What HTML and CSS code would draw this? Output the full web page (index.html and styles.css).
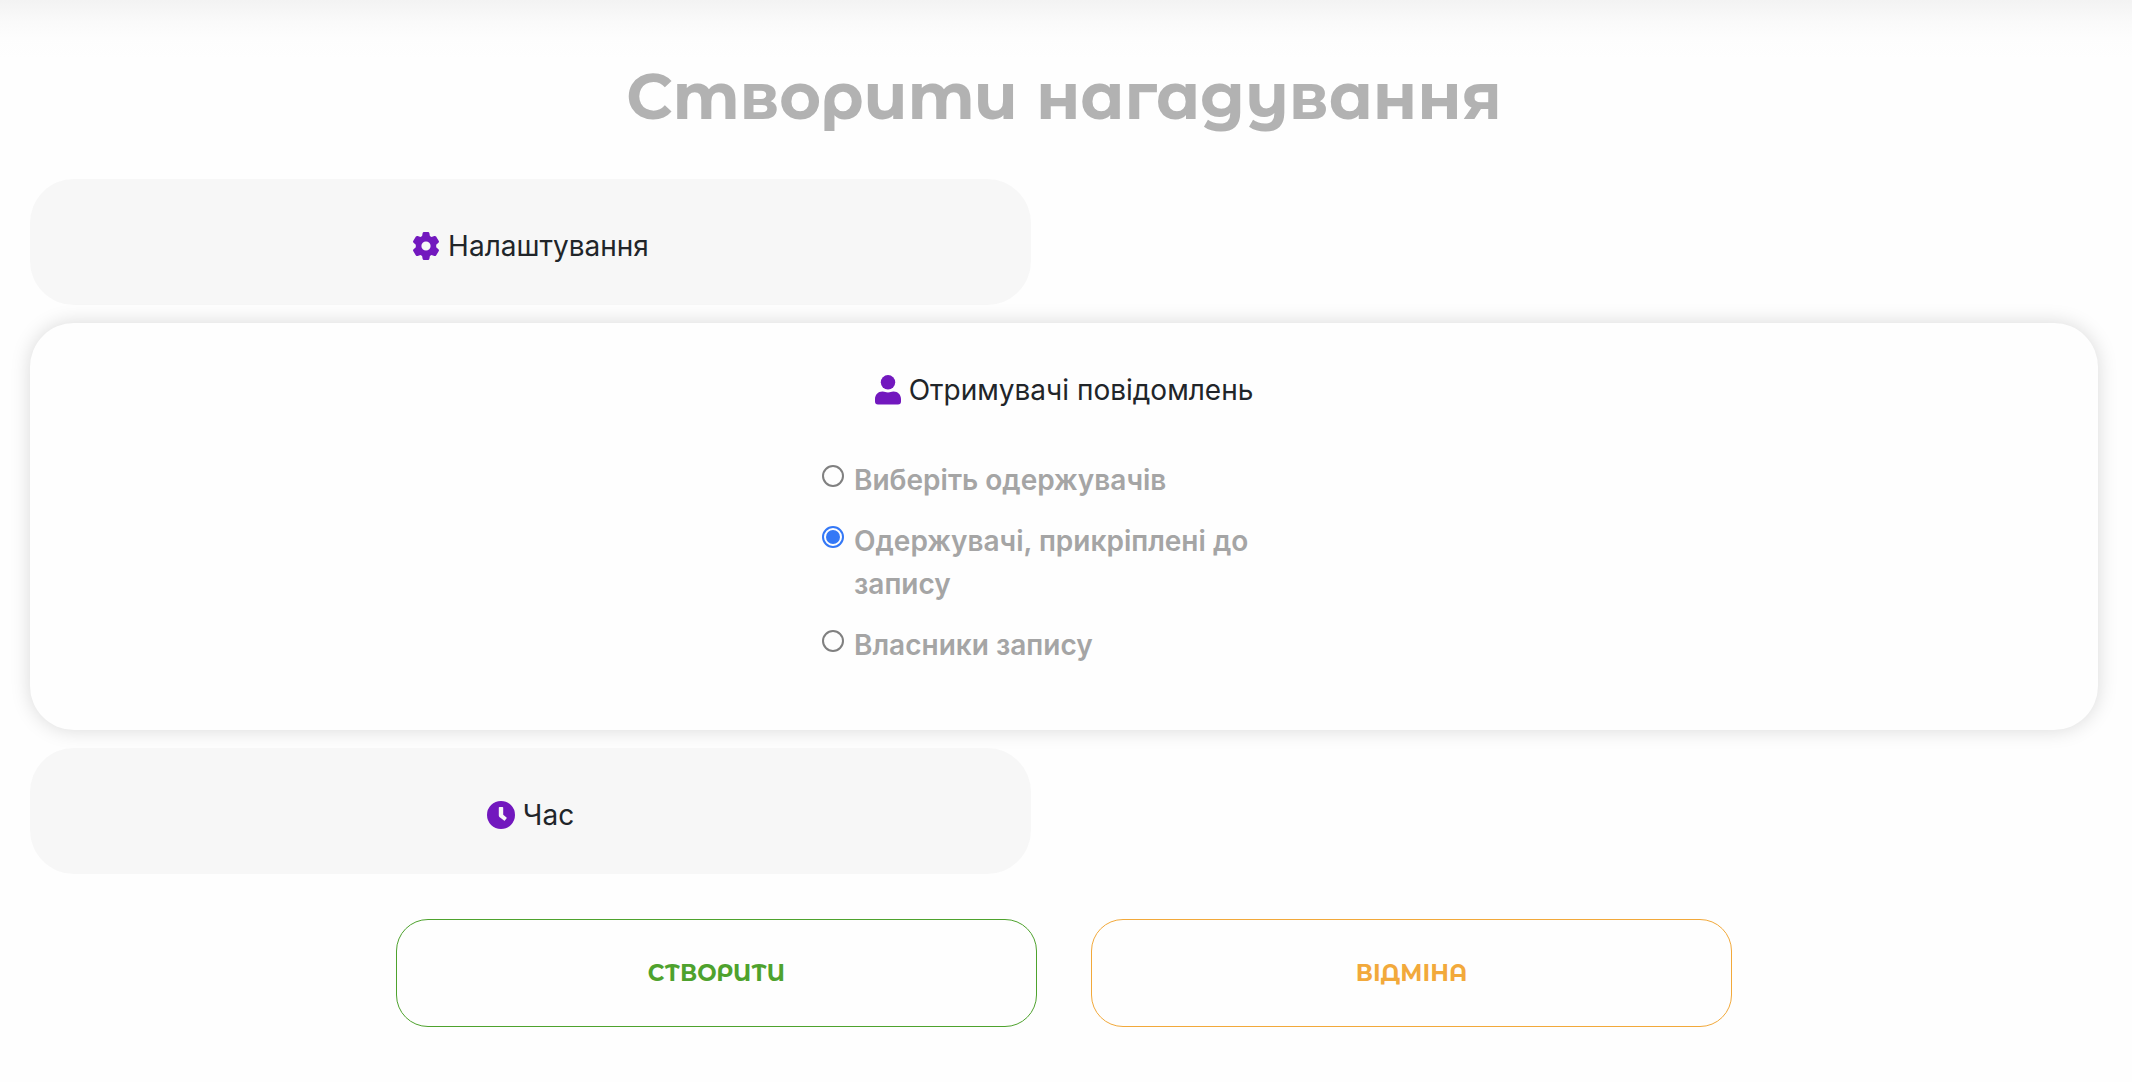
FILE: index.html
```html
<!DOCTYPE html>
<html lang="uk">
<head>
<meta charset="utf-8">
<meta name="viewport" content="width=device-width, initial-scale=1">
<title>Створити нагадування</title>
<link rel="stylesheet" href="styles.css">
</head>
<body>
<main class="page">
  <h1 class="title">Створити нагадування</h1>
  <form class="form">
    <section class="card">
      <h2 class="card-title">
        <svg class="icon" viewBox="0 0 28 28" aria-hidden="true"><path fill-rule="evenodd" d="M10.6 1.2Q10.8 0 12 0h4Q17.200 0 17.400 1.200L17.900 4.100 19.500 5 22.300 4Q23.400 3.600 24.100 4.600L26.800 9Q27.300 10 26.400 10.800L24.200 12.800V15.200L26.400 17.200Q27.300 18 26.800 19L24.100 23.400Q23.400 24.400 22.300 24L19.500 23 17.900 23.900 17.400 26.800Q17.200 28 16 28H12Q10.800 28 10.600 26.800L10.100 23.900 8.500 23 5.700 24Q4.600 24.400 3.900 23.400L1.200 19Q.7 18 1.600 17.200L3.800 15.200V12.800L1.600 10.800Q.7 10 1.200 9L3.900 4.600Q4.600 3.600 5.700 4L8.500 5 10.100 4.100ZM14 9.400a4.600 4.600 0 1 0 0 9.200a4.600 4.600 0 1 0 0-9.200Z"/></svg>
        Налаштування
      </h2>
    </section>

    <section class="card card-active">
      <h2 class="card-title">
        <svg class="icon icon-user" viewBox="0 0 26 30" aria-hidden="true"><circle cx="13" cy="7.300" r="7.200"/><path d="M7.500 16.500C10 16.500 10.500 17.500 13 17.500S16 16.500 18.500 16.500C23 16.500 26 20 26 24V26.500Q26 29.500 23 29.500H3Q0 29.500 0 26.500V24C0 20 3 16.500 7.500 16.500Z"/></svg>
        Отримувачі повідомлень
      </h2>
      <div class="options" role="radiogroup" aria-label="Отримувачі повідомлень">
        <label class="option"><input class="radio" type="radio" name="recipients"><span>Виберіть одержувачів</span></label>
        <label class="option"><input class="radio" type="radio" name="recipients" checked><span>Одержувачі, прикріплені до запису</span></label>
        <label class="option"><input class="radio" type="radio" name="recipients"><span>Власники запису</span></label>
      </div>
    </section>

    <section class="card">
      <h2 class="card-title">
        <svg class="icon" viewBox="0 0 28 28" aria-hidden="true"><path fill-rule="evenodd" d="M14 0a14 14 0 1 0 0 28a14 14 0 1 0 0-28ZM12.500 6h3q.7 0 .7.700v7.100l3.300 2.600q.5.400.100.900l-1.700 2.200q-.4.500-.900.100l-4.300-3.300q-.9-.700-.9-1.800V6.700q0-.7.700-.700Z"/></svg>
        Час
      </h2>
    </section>

    <div class="actions">
      <button class="button button-create" type="submit">СТВОРИТИ</button>
      <button class="button button-cancel" type="button">ВІДМІНА</button>
    </div>
  </form>
</main>
</body>
</html>
```
FILE: styles.css
```css
* {
  box-sizing: border-box;
}

body {
  margin: 0;
  background: #fefefe;
  background-image: linear-gradient(#f3f3f3, #f6f6f6 10px, #fafafa 22px, #fdfdfd 38px, #fefefe 60px);
  background-repeat: no-repeat;
  color: #212529;
  font-family: "Inter", "Liberation Sans", sans-serif;
  font-size: 28px;
  line-height: 43px;
}

.page {
  padding: 54px 34px 55px 30px;
}

.title {
  margin: 0 0 41px;
  color: #b2b2b2;
  font-family: "Montserrat Alternates", "DejaVu Sans", sans-serif;
  font-size: 64px;
  font-weight: 700;
  line-height: 84px;
  text-align: center;
}

.form {
  display: flex;
  flex-direction: column;
  gap: 18px;
}

.card {
  width: calc(50% - 33px);
  padding: 46px 30px 37px;
  border-radius: 44px;
  background: #f7f7f7;
}

.card-active {
  width: 100%;
  padding-bottom: 63px;
  background: #fefefe;
  box-shadow: 0 0 20px rgba(0, 0, 0, 0.15);
}

.card-title {
  display: flex;
  align-items: center;
  justify-content: center;
  gap: 8px;
  margin: 0;
  font-size: 28px;
  font-weight: 400;
}

.icon {
  flex: none;
  width: 28px;
  height: 28px;
  margin-bottom: 2px;
  fill: #7218be;
}

.icon-user {
  width: 26px;
  height: 30px;
}

.options {
  display: flex;
  flex-direction: column;
  gap: 18px;
  width: 484px;
  max-width: 100%;
  margin: 47px auto 0;
}

.option {
  display: flex;
  align-items: flex-start;
  gap: 10px;
  color: #a5a5a5;
  font-weight: 600;
}

.radio {
  flex: none;
  width: 22px;
  height: 22px;
  margin: 6px 0 0;
  padding: 2px;
  border: 2px solid #808080;
  border-radius: 50%;
  appearance: none;
}

.radio:checked {
  border-color: #3478f6;
  background: #3478f6 content-box;
}

.actions {
  display: flex;
  justify-content: center;
  gap: 54px;
  margin-top: 27px;
}

.button {
  width: 31%;
  height: 108px;
  border: 1px solid;
  border-radius: 32px;
  background: transparent;
  font-family: "Montserrat Alternates", "Inter", sans-serif;
  font-size: 23px;
  font-weight: 700;
}

.button-create {
  border-color: #4ea22d;
  color: #4ea22d;
}

.button-cancel {
  border-color: #f2a93b;
  color: #f2a93b;
}
```
